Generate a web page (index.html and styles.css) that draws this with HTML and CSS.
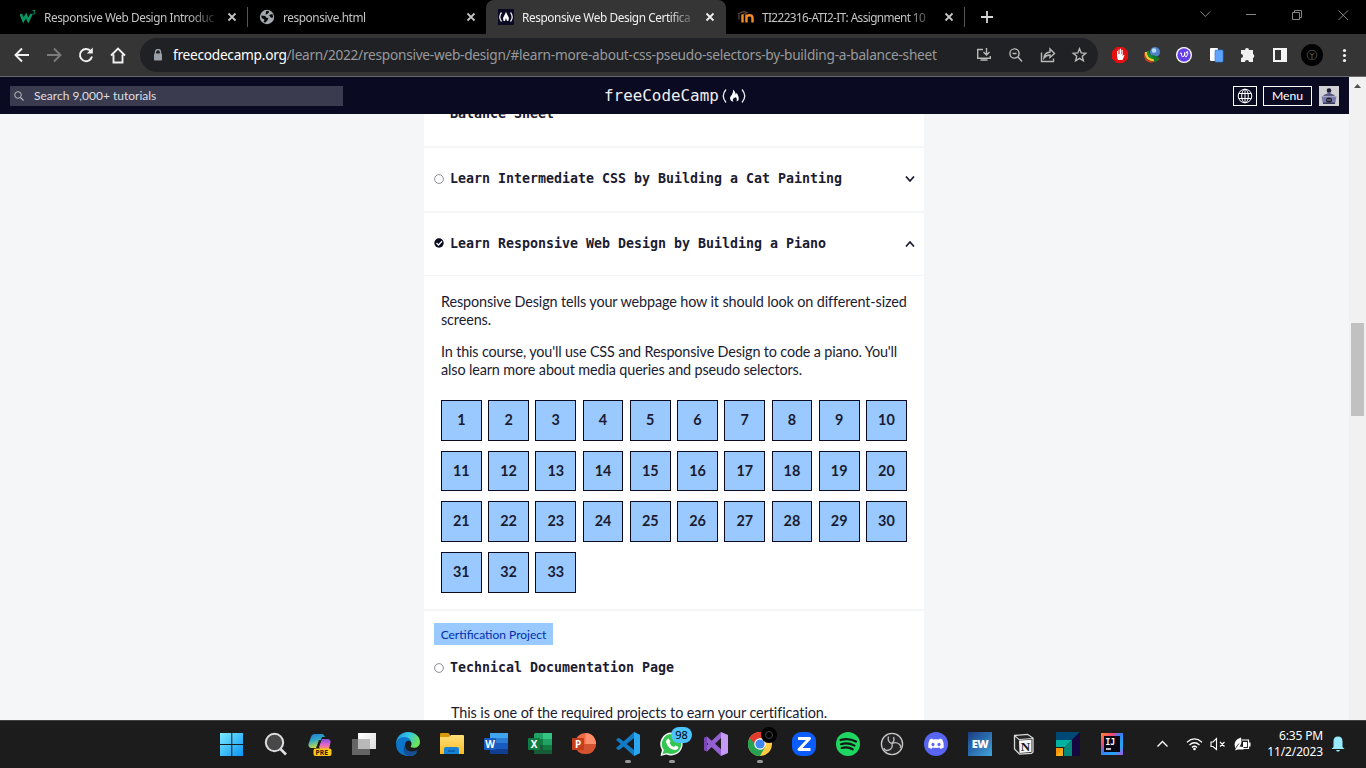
FILE: index.html
```html
<!DOCTYPE html>
<html lang="en">
<head>
<meta charset="utf-8">
<title>Responsive Web Design Certification</title>
<link rel="stylesheet" href="styles.css">
</head>
<body>
<svg width="0" height="0" class="defs"><defs>
<symbol id="x" viewBox="0 0 10 10"><path d="M1.5 1.5l7 7M8.5 1.5l-7 7" stroke="currentColor" stroke-width="1.8" fill="none"/></symbol>
<linearGradient id="win" x2="1" y2="1"><stop stop-color="#7cecff"/><stop offset="1" stop-color="#0a94f5"/></linearGradient>
<linearGradient id="cpa" x2=".3" y2="1"><stop stop-color="#1c78d8"/><stop offset=".5" stop-color="#33a9c4"/><stop offset="1" stop-color="#c8d84a"/></linearGradient>
<linearGradient id="cpb" x2="0" y2="1"><stop stop-color="#7a52d8"/><stop offset=".5" stop-color="#dc61d4"/><stop offset="1" stop-color="#fb956d"/></linearGradient>
<linearGradient id="edg" x2="1" y2=".4"><stop stop-color="#1a8ad8"/><stop offset=".5" stop-color="#31c6e8"/><stop offset="1" stop-color="#6be35c"/></linearGradient>
<linearGradient id="tv" x2="1" y2="1"><stop stop-color="#fff"/><stop offset="1" stop-color="#ddd"/></linearGradient>
<linearGradient id="fol" x2="0" y2="1"><stop stop-color="#ffe07a"/><stop offset="1" stop-color="#fabb24"/></linearGradient>
<linearGradient id="ew" x2="1" y2="1"><stop stop-color="#1b3b80"/><stop offset="1" stop-color="#3fa4dd"/></linearGradient>
<linearGradient id="ij" x2="1" y2="1"><stop stop-color="#ff8a2a"/><stop offset=".3" stop-color="#f2447b"/><stop offset=".45" stop-color="#3d7df5"/><stop offset=".75" stop-color="#22a7f5"/><stop offset="1" stop-color="#b44fe0"/></linearGradient>
</defs></svg>

<header class="tabs">
  <div class="tab">
    <svg class="fav" viewBox="0 0 16 16"><path d="M.8 5l2.500 6.500L6 6.500l2.300 5L11.500 5" fill="none" stroke="#059862" stroke-width="2.600"/><path d="M12.500 1.500h2.500l-1.300 1.500q1.600.2 1.300 1.400-.5 1-2.500.5" fill="none" stroke="#059862" stroke-width=".9"/></svg>
    <span class="title t1">Responsive Web Design Introduc</span><svg class="close"><use href="#x"/></svg>
  </div>
  <div class="tab lined">
    <svg class="fav" viewBox="0 0 16 16"><circle cx="8" cy="8" r="7.200" fill="#a5a9b0"/><path d="M2.200 6.500l4 .6 1.300 1.600 2 .3-1 2.300-2 2.300-2-.6 1-2.300-2.800-1.600zM7 2.300l2.500-.6.6 1.600-2 2-1.500.3M10 6l3.500-1 .7 3.500-2.300.2z" fill="#080808"/></svg>
    <span class="title t2">responsive.html</span><svg class="close"><use href="#x"/></svg>
  </div>
  <div class="tab active">
    <svg class="fav" viewBox="0 0 16 16"><path fill="#0a0a23" d="M0 0h16v16H0z"/><path d="M3.500 3.500q-3.500 4.500 0 9M12.500 3.500q3.500 4.500 0 9" stroke="#e8e8ee" fill="none" stroke-width="1.300"/><path d="M8 3l3 6-.7 3H9l-1-3-1 3H5.500L5 9z" fill="#fff"/></svg>
    <span class="title t3">Responsive Web Design Certifica</span><svg class="close"><use href="#x"/></svg>
  </div>
  <div class="tab last">
    <svg class="fav" viewBox="0 0 16 16"><path d="M0 5l6-2.500 3 1L4 6M1 5.500v5" stroke="#5a4436" stroke-width="1.300" fill="none"/><path d="M4.500 13.500V5.500" stroke="#f98b25" stroke-width="2.400"/><path d="M8.500 13.500V5.500M8.500 8q.3-1.800 3-1.800t3 2.300v5" stroke="#f98b25" stroke-width="2.400" fill="none"/></svg>
    <span class="title t4">TI222316-ATI2-IT: Assignment 10</span><svg class="close"><use href="#x"/></svg>
  </div>
  <svg class="plus" viewBox="0 0 12 12"><path d="M6 0v12M0 6h12" stroke="#d6d6d6" stroke-width="1.800"/></svg>
  <svg class="winctl" viewBox="0 0 150 14"><g fill="none" stroke="#858585"><path d="M.5 1.500l4.800 5 4.800-5M46 4.500h10M92.500 2.500h7v7h-7zM94.500 2V.5h7v7H100M138.500.5l9.500 9.500M148 .5L138.500 10"/></g></svg>
</header>

<nav class="toolbar">
  <svg class="navicons" viewBox="0 0 112 18"><g fill="none" stroke="#f1f1f1" stroke-width="1.900"><path d="M15 9H2M8 2.500L1.500 9 8 15.500"/><path d="M33 9h13M40 2.500L46.500 9 40 15.500" stroke="#7b7b7b"/><path d="M77 5.500A6.100 6.100 0 1 0 78 10.500"/><path d="M78.800 1.500v6h-6z" fill="#f1f1f1" stroke="none"/><path d="M99.500 8.500v8h9v-8M97 9.500l7-7 7 7"/></g></svg>
  <div class="omnibox">
    <svg class="lock" viewBox="0 0 10 12"><path d="M2.500 5V3a2.500 2.500 0 0 1 5 0v2" fill="none" stroke="#9aa0a6" stroke-width="1.400"/><rect x="1" y="4.500" width="8" height="7" rx=".8" fill="#9aa0a6"/></svg>
    <span class="url"><b>freecodecamp.org</b>/learn/2022/responsive-web-design/#learn-more-about-css-pseudo-selectors-by-building-a-balance-sheet</span>
    <svg class="boxicons" viewBox="0 0 112 16"><g fill="none" stroke="#b9b9b9" stroke-width="1.400"><path d="M7 2.500H1.700v8.800h12.600V9M4.500 13h7M10.500 1v6.500M7.500 5l3 3 3-3"/><circle cx="38.500" cy="6.500" r="4.600"/><path d="M36.500 6.500h4M42 10l4 4.500M65.500 5.500v9h12v-3M68 11q0-5 6-6V2l4.500 4.500L74 10.500V8q-4 0-6 3z"/><path transform="translate(6.500 0)" d="M97 1.700l1.700 4.200 4.600.4-3.500 3 1.100 4.500-3.900-2.400-3.900 2.400 1.100-4.500-3.500-3 4.600-.4z"/></g></svg>
  </div>
  <svg class="exts" viewBox="0 0 244 24">
    <path d="M6.500 4h7l4.500 4.500v7L13.500 20h-7L2 15.500v-7z" fill="#e60f0f"/><path d="M7 12V8h1v3h.5V6.500h1V11h.5V5.700h1.200V11h.5V7h1v6l1-1.200.8.5-2 4.700H8q-1-2-1-4z" fill="#fff"/>
    <path d="M35 10q-1 8 6 9l8-3" fill="none" stroke="#c73a25" stroke-width="1.600"/><path d="M36 9q0 8 8 8" fill="none" stroke="#e2ca2f" stroke-width="2.500"/><path d="M38 8q0 6 6 7" fill="none" stroke="#14912d" stroke-width="2.500"/><circle cx="45" cy="9" r="5" fill="#4f83ca"/><circle cx="44" cy="7.500" r="2.300" fill="#b9dcf4"/><path d="M42 11.500l8 3.500-5 5z" fill="#137826"/>
    <circle cx="74" cy="12" r="8" fill="#fff"/><circle cx="74" cy="12" r="6.700" fill="#6540e8"/><path d="M70 10.500q1.500-1.500 1.500.5 0 4 2.500 2 1.500-2 .5-3.500 0 5 1.500 4.500 3-3 1.500-5.500-1-.5-1.500 2" stroke="#fff" fill="none"/>
    <rect x="100" y="5" width="8" height="13" rx="1" fill="#fff"/><rect x="105" y="7" width="8" height="12" rx="1" fill="#5da3ff" stroke="#347bd8" stroke-width=".7"/>
    <path d="M132 7h3a2 2 0 0 1 4 0h4v4a2.200 2.200 0 0 1 0 4v4h-4a2 2 0 0 0-4 0h-4v-4a2 2 0 0 0 0-4V7z" fill="#f1f1f1"/>
    <path d="M163 5h14v14h-14zM165 7v10h6V7z" fill="#f4f4f4" fill-rule="evenodd"/>
    <circle cx="202" cy="12" r="11" fill="#000"/><circle cx="202" cy="12" r="4.800" fill="none" stroke="#3b484c"/><path d="M199.500 10l2.500 2 2.500-2M202 12v4" stroke="#66502c" fill="none"/>
    <g fill="#f1f1f1"><circle cx="234.500" cy="7.500" r="1.600"/><circle cx="234.500" cy="12.500" r="1.600"/><circle cx="234.500" cy="17.500" r="1.600"/></g>
  </svg>
</nav>

<div class="viewport">
  <div class="page">
    <div class="fcc">
      <div class="search"><svg viewBox="0 0 10 10" width="10" height="10"><circle cx="4" cy="4" r="3.300" fill="none" stroke="#bbb" stroke-width="1"/><path d="M6.500 6.500L9.500 9.500" stroke="#bbb" stroke-width="1.100"/></svg><span>Search 9,000+ tutorials</span></div>
      <div class="logo"><span>freeCodeCamp</span><svg viewBox="0 0 26 18" width="26" height="18"><path d="M5 2.500Q-.5 9 5 15.500M21 2.500Q26.500 9 21 15.500" fill="none" stroke="#eee" stroke-width="1.300"/><path d="M12 2.500q3 3 2.500 5l1.300-1.500q3 5 1.500 7.500l-1.800 1q1-3-1-4.500-.3 1.700-1.500.5-2 2-.5 4.200-3-.4-3.500-3 0-2 2-4.200Q12.500 5 12 2.500z" fill="#fff"/></svg></div>
      <div class="acts">
        <div class="btn lang"><svg viewBox="0 0 16 16" width="16" height="16"><g fill="none" stroke="#fff"><circle cx="8" cy="8" r="6.800"/><ellipse cx="8" cy="8" rx="3.300" ry="6.800"/><path d="M8 1v14M1.800 5.500h12.400M1.800 10.500h12.400"/></g></svg></div>
        <div class="btn menu">Menu</div>
        <svg class="avatar" viewBox="0 0 20 20"><path fill="#d0d0d5" d="M0 0h20v20H0z"/><circle cx="10" cy="4.500" r="2.300" fill="#1b1b32"/><path d="M4 10q1-2 4.500-2.500V6h3v1.500Q15 8 16 10z" fill="#5b5b86"/><path d="M2.500 10.500h15L16 18H4z" fill="#7b7baf"/><path d="M4 16.500h12v1.500H4z" fill="#3b3b5b"/><ellipse cx="10" cy="14" rx="3" ry="2.600" fill="#1b1b32"/><path d="M8.500 14h1M10.500 14h1" stroke="#fff"/></svg>
      </div>
    </div>
    <main class="scroll">
      <div class="column">
        <section class="row first"><h3>Balance Sheet</h3></section>
        <section class="row head"><svg class="mark" viewBox="0 0 10 10"><circle cx="5" cy="5" r="4.400" fill="none" stroke="#737382" stroke-width=".8"/></svg><h3>Learn Intermediate CSS by Building a Cat Painting</h3><svg class="chev" viewBox="0 0 10 6"><path d="M1 .5L5 5 9 .5" fill="none" stroke="#1b1b32" stroke-width="1.700"/></svg></section>
        <section class="row head open"><svg class="mark up" viewBox="0 0 10 10"><circle cx="5" cy="5" r="4.700" fill="#0a0a23"/><path d="M2.500 5l2 2L8 3.300" fill="none" stroke="#fff" stroke-width="1.300"/></svg><h3>Learn Responsive Web Design by Building a Piano</h3><svg class="chev" viewBox="0 0 10 6"><path d="M1 5.500L5 1l4 4.500" fill="none" stroke="#1b1b32" stroke-width="1.700"/></svg></section>
        <section class="details">
          <p><span class="l1">Responsive Design tells your webpage how it should look on different-sized</span><br><span class="l2">screens.</span></p>
          <p><span class="l3">In this course, you'll use CSS and Responsive Design to code a piano. You'll</span><br><span class="l4">also learn more about media queries and pseudo selectors.</span></p>
          <div class="grid"><a>1</a><a>2</a><a>3</a><a>4</a><a>5</a><a>6</a><a>7</a><a>8</a><a>9</a><a>10</a><a>11</a><a>12</a><a>13</a><a>14</a><a>15</a><a>16</a><a>17</a><a>18</a><a>19</a><a>20</a><a>21</a><a>22</a><a>23</a><a>24</a><a>25</a><a>26</a><a>27</a><a>28</a><a>29</a><a>30</a><a>31</a><a>32</a><a>33</a></div>
        </section>
        <section class="project">
          <span class="badge">Certification Project</span>
          <div class="ptitle"><svg class="mark" viewBox="0 0 10 10"><circle cx="5" cy="5" r="4.400" fill="none" stroke="#737382" stroke-width=".8"/></svg><h3>Technical Documentation Page</h3></div>
          <p><span class="l5">This is one of the required projects to earn your certification.</span></p>
        </section>
      </div>
    </main>
  </div>
  <aside class="scrollbar"><svg width="17" height="17" viewBox="0 0 17 17"><path d="M5 11l3.500-4 3.500 4z" fill="#505050"/></svg><div class="thumb"></div></aside>
</div>

<footer class="taskbar">
  <div class="apps">
    <div class="app"><svg viewBox="0 0 24 24"><path fill="url(#win)" d="M0 1h11.300v11H0zM12.300 1H23v11H12.300zM0 13h11.300v11H0zM12.300 13H23v11H12.300z"/></svg></div>
    <div class="app"><svg viewBox="0 0 24 24"><circle cx="10.500" cy="10.500" r="8.700" fill="#484848" stroke="#dedee2" stroke-width="2"/><path d="M16.500 17l5.500 5.500" stroke="#dedee2" stroke-width="2.600"/></svg></div>
    <div class="app"><svg viewBox="0 0 24 24"><path d="M6.500 2H15l2 3h-3L9.500 16H3q-3-1-2.500-4L3 5q1-3 3.500-3z" fill="url(#cpa)"/><path d="M14 7h6q3 1 2.500 3.500L21 17h-9l-1-2z" fill="url(#cpb)"/><path d="M11 8h2l-2.500 8H8z" fill="#1c1c1c"/><rect x="5.500" y="16.500" width="18" height="7.500" rx="2" fill="#ffc814"/><text x="7.500" y="22.800" class="pre">PRE</text></svg></div>
    <div class="app"><svg viewBox="0 0 24 24"><path d="M6 1h18v16H6z" fill="url(#tv)"/><path d="M0 7h18v16H0z" fill="#656565"/><path d="M6 7h12v10H6z" fill="#b9b9b9"/></svg></div>
    <div class="app"><svg viewBox="0 0 24 24"><path d="M.2 12C0 5 5 0 12 0s12 4.500 12 10c0 5-5 7-9.500 5 2-3 1-7-3-8S3 7 .2 12z" fill="url(#edg)"/><path d="M.2 13C0 8 4 5 8 5c5 0 7 3 7 5-3-3-7 0-6 5 1 6 8 7 12 5-3 5-9 5-12 3.500C3 22 .2 18 .2 13z" fill="#0b75cb"/><path d="M9 13c0 6 6 8 13 5q-4 6-10 6-7-3-3-11z" fill="#154e92"/></svg></div>
    <div class="app"><svg viewBox="0 0 24 24"><path d="M0 2q0-1 1-1h7q1 0 2 2v4H0z" fill="#db9a05"/><path d="M0 5h9l2-2h12q1 0 1 1v18H0z" fill="url(#fol)"/><path d="M4 22v-5q0-2 2-2h11q2 0 2 2v5z" fill="#1782d4"/><path d="M8 19h7" stroke="#0a559a" stroke-width="1.300"/></svg></div>
    <div class="app"><svg viewBox="0 0 24 24"><rect x="6" y="1" width="18" height="21" rx="1.500" fill="#2b7cd3"/><path d="M6 1h18v5H6z" fill="#41a5ee"/><path d="M6 11h18v6H6z" fill="#185abd"/><path d="M6 17h18v5H6z" fill="#103f91"/><rect y="6" width="12" height="12" rx="1" fill="#185abd"/><text class="ofc" x="6" y="16">W</text></svg></div>
    <div class="app"><svg viewBox="0 0 24 24"><rect x="6" y="1" width="18" height="21" rx="1.500" fill="#21a366"/><path d="M6 7h9v6H6z" fill="#107c41"/><path d="M15 1h9v6h-9z" fill="#33c481"/><path d="M6 13h18v9H6z" fill="#185c37"/><path d="M15 13h9v5h-9z" fill="#107c41"/><rect y="6" width="12" height="12" rx="1" fill="#107c41"/><text class="ofc" x="6" y="16">X</text></svg></div>
    <div class="app"><svg viewBox="0 0 24 24"><circle cx="13.500" cy="11.500" r="10.500" fill="#ed6c47"/><path d="M13.500 1A10.500 10.500 0 0 1 24 12H13.500z" fill="#ff8f6b"/><path d="M3 12h21q-1 10-10.500 10T3 12z" fill="#d35230"/><rect y="6" width="12" height="12" rx="1" fill="#c43e1c"/><text class="ofc" x="6" y="16">P</text></svg></div>
    <div class="app run"><svg viewBox="0 0 24 24"><path d="M18 0l6 3v18l-6 3L2 9.500 0 8l2-2 2 .5L18 18V6L4 17.500l-2 .5-2-2L17 1z" fill="#127bc4"/><path d="M18 0l6 3v18l-6 3z" fill="#2aa5ef"/></svg></div>
    <div class="app run"><svg viewBox="0 0 24 24"><path d="M12 .5A11.500 11.500 0 1 1 6.500 22.500L.5 24 2 18A11.500 11.500 0 0 1 12 .5z" fill="#fff"/><path d="M12 2A10 10 0 1 1 7 21l-4.500 1.200L3.800 18A10 10 0 0 1 12 2z" fill="#35c651"/><path d="M8.500 6.500l2 3-1 1.500q1.500 3 4.500 4l1.500-1.500 3 1.500q-.5 3-3.500 3-7-1-9-8-.2-2.500 2.500-3.500z" fill="#fff"/></svg><span class="count">98</span></div>
    <div class="app"><svg viewBox="0 0 24 24"><path d="M0 6l3-1.500L18 18l-1 6L0 8zM17 0v6L3 19.500 0 18v-2z" fill="#9460cf"/><path d="M0 6l3-1.500V19.500L0 18z" fill="#7a45b5"/><path d="M17 0l7 3v18l-7 3z" fill="#c49af5"/></svg></div>
    <div class="app run"><svg viewBox="0 0 24 24"><circle cx="12" cy="12" r="12" fill="#fc4"/><path d="M1.600 6A12 12 0 0 0 12 24l5-9-5-3z" fill="#26a350"/><path d="M12 6h10.400H12L7 12 1.600 6A12 12 0 0 1 22.400 6z" fill="#e33b2e"/><circle cx="12" cy="12" r="5.800" fill="#fff"/><circle cx="12" cy="12" r="4.600" fill="#4285f4"/></svg><span class="profile"><i></i></span></div>
    <div class="app"><svg viewBox="0 0 24 24"><rect width="24" height="24" rx="9" fill="#0b5cff"/><path d="M6 6.500h11.500L7 17.500h11.500" fill="none" stroke="#fff" stroke-width="3" stroke-linejoin="round"/></svg></div>
    <div class="app"><svg viewBox="0 0 24 24"><circle cx="12" cy="12" r="12" fill="#1ed760"/><path d="M4.500 8q8-2.500 15.500 1.500M5 12.200q7-2 13.500 1.400M5.700 16q6-1.500 11 1.300" fill="none" stroke="#151515" stroke-width="2.200" stroke-linecap="round"/></svg></div>
    <div class="app"><svg viewBox="0 0 24 24"><circle cx="12" cy="12" r="10.600" fill="#252427" stroke="#c8c8c8" stroke-width="1.300"/><path d="M8.500 4.500Q7 10 12 11.500q4-2 7 .5t1 4M12 11.500q1 5-3 6.500t-5-2M12 11.500q3-3 1.500-6.500" fill="none" stroke="#b8b8b8" stroke-width="1.400"/></svg></div>
    <div class="app"><svg viewBox="0 0 24 24"><circle cx="12" cy="12" r="12" fill="#5865f2"/><path d="M8 6.500l1 .9q3-.5 6 0l1-.9 2.300 1q2 3.500 1.500 8L16.500 17l-1-1.500q-3.500.8-7 0l-1 1.500L4.200 15.500q-.5-4.500 1.500-8z" fill="#fff"/><ellipse cx="9" cy="12.500" rx="1.500" ry="1.800" fill="#5865f2"/><ellipse cx="15" cy="12.500" rx="1.500" ry="1.800" fill="#5865f2"/></svg></div>
    <div class="app"><svg viewBox="0 0 24 24"><path fill="url(#ew)" d="M0 0h24v24H0z"/><path d="M24 0L0 23V10z" fill="#2563ae" opacity=".5"/><text class="ewt" x="12" y="16">EW</text></svg></div>
    <div class="app"><svg viewBox="0 0 24 24"><path d="M2.500 3.500l13-1.200 5.500 3.700V20l-1.500 1.300-12 .8L2.500 17z" fill="#252525" stroke="#d8d8d8" stroke-width="1.300"/><path d="M3 4l4 3.500L21 6.500" fill="none" stroke="#d8d8d8" stroke-width="1.100"/><path d="M7 8.500l12.500-.8V20L7.500 21z" fill="#f5f5f5"/><text class="notion" x="13.500" y="18.500">N</text></svg></div>
    <div class="app"><svg viewBox="0 0 24 24"><path d="M0 0h24l-8 8H0z" fill="#004876"/><path d="M24 0v24h-8V8z" fill="#17063f"/><path d="M0 8h16l-7 7H0z" fill="#00b3a0"/><path d="M16 8v16H8v-8z" fill="#008a7c"/><path d="M0 16h7v8H0z" fill="#ff9500"/><path d="M7 16v8H0z" fill="#ffb01f"/></svg></div>
    <div class="app"><svg viewBox="0 0 24 24"><path fill="url(#ij)" d="M1 1h22v22H1z"/><path d="M4 4h16v16H4z" fill="#090511"/><path d="M6 17h5" stroke="#fff" stroke-width="1.500"/><text class="ijt" x="5.500" y="12.500">IJ</text></svg></div>
  </div>
  <div class="tray">
    <svg viewBox="0 0 96 20" width="96" height="20"><g fill="none" stroke="#fff" stroke-width="1.400"><path d="M2.500 12.500l5-5 5 5"/><path d="M32 8.200q7.500-6.500 15 0M34.500 11q5-4.500 10 0M37 13.500q2.500-2.500 5 0" stroke-width="1.200"/><path d="M56 8h2l3.500-3.500v11L58 12.500h-2zM65 8l4.500 4.500M69.500 8L65 12.500" stroke-width="1.100"/><path d="M87 6h6.500v8.500H83" stroke-width="1.200"/></g><circle cx="39.500" cy="15" r="1.300" fill="#fff"/><path d="M94 8.500h1.500v4H94zM88 8h4v5h-4zM80 13q-2-7 6-9.500 1.500 5.500-1.500 9l4 .5v2.500h-6l-2 1z" fill="#fff"/><path d="M80 15.500q2-4 4-6" stroke="#1c1c1c" fill="none" stroke-width=".8"/></svg>
    <div class="clock"><span>6:35 PM</span><span class="date">11/2/2023</span></div>
    <svg viewBox="0 0 14 16" width="14" height="16"><path d="M2.500 11V5.500q0-5 4.500-5t4.500 5V11l2 2H.5zM5 14h4l-1 1.500H6z" fill="#99ebff"/></svg>
  </div>
</footer>
</body>
</html>
```
FILE: styles.css
```css
* { box-sizing: border-box; }
body { margin: 0; width: 1366px; height: 768px; overflow: hidden; display: flex; flex-direction: column; background: #000; font-family: "Noto Sans", sans-serif; }
svg { display: block; flex: none; }
.defs { position: absolute; }
h3, p { margin: 0; }

.tabs { height: 34px; flex: none; display: flex; align-items: center; padding-left: 8px; background: #000; }
.tab { width: 239px; height: 34px; display: flex; align-items: center; padding-left: 12px; color: #c4c4c4; font-size: 11.8px; letter-spacing: -.4px; }
.tab.lined::before { content: ""; width: 1px; height: 20px; background: #555; margin: 0 11px 0 -12px; }
.tab.active { width: 240px; background: #353535; border-radius: 8px 8px 0 0; color: #f0f0f0; }
.tab.last::after { content: ""; width: 1px; height: 20px; background: #555; margin-left: 10px; }
.fav { width: 16px; height: 16px; margin-right: 8px; }
.title { width: 178px; margin-right: -5px; height: 18px; line-height: 18px; white-space: nowrap; mask-image: linear-gradient(90deg, #000 145px, rgba(0,0,0,.15) 172px); }
.t1 { letter-spacing: -.43px; }
.t3 { letter-spacing: -.4px; }
.t4 { letter-spacing: -.6px; }
.close { width: 10px; height: 10px; margin-left: 10px; }
.plus { width: 12px; height: 12px; margin-left: 16px; }
.winctl { width: 150px; height: 14px; margin-left: 207px; }

.toolbar { height: 43px; flex: none; display: flex; align-items: center; padding-left: 14px; background: #353535; border-bottom: 1px solid #696969; }
.navicons { width: 112px; height: 18px; }
.omnibox { width: 958px; height: 34px; border-radius: 17px; margin-left: 14px; background: #202124; display: flex; align-items: center; padding-left: 13px; }
.lock { width: 10px; height: 12px; }
.url { width: 800px; margin-left: 10px; white-space: nowrap; color: #989a9d; font-size: 13.7px; line-height: 20px; letter-spacing: -.27px; }
.url b { font-weight: 400; color: #fff; }
.boxicons { width: 112px; height: 16px; margin-left: 3px; }
.exts { width: 244px; height: 24px; margin-left: 12px; }

.viewport { height: 643px; flex: none; display: flex; }
.page { width: 1349px; display: flex; flex-direction: column; background: #f5f6f7; }
.fcc { height: 37px; flex: none; display: flex; align-items: center; padding: 0 10px; background: #0a0a23; color: #fff; font-family: Lato, sans-serif; }
.search { width: 333px; height: 20px; display: flex; align-items: center; gap: 10px; padding-left: 4px; background: #3b3b4f; color: #dfdfe2; font-size: 12px; }
.logo { margin-left: 261px; width: 145px; display: flex; align-items: center; gap: 2px; font: 15.9px "DejaVu Sans Mono", monospace; color: #eee; }
.acts { margin-left: auto; display: flex; align-items: center; gap: 6px; }
.btn { height: 20px; border: 1px solid #fff; display: flex; align-items: center; justify-content: center; font-size: 12.2px; }
.lang { width: 24px; }
.menu { width: 49px; }
.avatar { width: 20px; height: 20px; margin-left: 1px; }
.scroll { height: 606px; overflow: hidden; }
.column { width: 500px; margin-left: 424px; background: #fff; color: #1b1b32; font: 14.4px/18px Lato, sans-serif; }
h3 { font: bold 13.3px/18px "DejaVu Sans Mono", monospace; letter-spacing: -0.007px; white-space: nowrap; }
.row { border-bottom: 2px solid #f5f6f7; }
.first { height: 34px; padding-left: 26px; display: flow-root; }
.first h3 { margin-top: -9px; }
.head { height: 65px; display: flex; align-items: center; padding: 0 9px 2px 10px; }
.head h3 { margin-left: 6px; }
.open { height: 63px; padding-bottom: 0; border-bottom-width: 1px; }
.mark { width: 10px; height: 10px; }
.up { margin-bottom: 3px; }
.chev { width: 10px; height: 6px; margin-left: auto; }
.details { height: 335px; padding: 17px 17px 0; border-bottom: 2px solid #f5f6f7; }
.details p { margin-bottom: 14px; white-space: nowrap; }
.l1 { letter-spacing: -.12px; }
.l2 { letter-spacing: -.12px; }
.l3 { letter-spacing: -.155px; }
.l4 { letter-spacing: -.13px; }
.l5 { letter-spacing: -.08px; }
.grid { display: grid; grid-template-columns: repeat(10, 40.65px); column-gap: 6.6px; grid-auto-rows: 40.65px; row-gap: 10px; padding-top: 7px; }
.grid a { border: 1px solid #0a0a23; background: #99c9ff; font: bold 14.4px/37px Lato, sans-serif; text-align: center; }
.project { height: 116px; padding: 12px 10px 0; }
.badge { display: block; width: 119px; height: 22px; line-height: 23px; text-align: center; font-size: 12px; background: #99c9ff; color: #002ead; }
.ptitle { display: flex; align-items: center; height: 18px; margin: 14px 0 27px; }
.ptitle h3 { margin-left: 6px; }
.project p { padding-left: 17px; white-space: nowrap; }
.scrollbar { width: 17px; background: #f1f1f1; }
.thumb { width: 13px; height: 93px; margin: 229px 0 0 2px; background: #c1c1c1; }

.taskbar { height: 48px; flex: none; display: flex; align-items: center; padding: 0 21px 0 210px; background: #1c1c1c; border-top: 1px solid #424242; color: #fff; }
.apps { display: flex; height: 47px; }
.app { width: 44px; height: 47px; position: relative; display: flex; align-items: center; justify-content: center; padding-bottom: 1px; }
.app > svg { width: 24px; height: 24px; }
.run::after { content: ""; position: absolute; left: 19px; bottom: 5px; width: 6px; height: 3px; border-radius: 2px; background: #999; }
.pre { font: bold 6.8px "Noto Sans"; fill: #291b00; }
.ofc { font: bold 10px "Noto Sans"; fill: #fff; text-anchor: middle; }
.ewt { font: 800 11px "Open Sans"; fill: #fff; text-anchor: middle; letter-spacing: -.6px; }
.notion { font: bold 13px "Liberation Serif"; fill: #151515; text-anchor: middle; }
.ijt { font: bold 8px "DejaVu Sans Mono"; fill: #fff; }
.count { position: absolute; left: 21px; top: 6px; width: 21px; height: 16px; border-radius: 8px; background: #4cc2ff; color: #000; font-size: 11px; line-height: 16px; text-align: center; }
.profile { position: absolute; left: 23px; top: 6px; width: 16px; height: 16px; border-radius: 50%; background: #000; display: flex; align-items: center; justify-content: center; }
.profile i { width: 8px; height: 8px; border: 1px solid #454545; border-radius: 50%; }
.tray { margin-left: auto; display: flex; align-items: center; padding-bottom: 1px; }
.clock { width: 72px; display: flex; flex-direction: column; align-items: flex-end; font-size: 12px; line-height: 16px; margin-right: 8px; letter-spacing: -.15px; }
```
